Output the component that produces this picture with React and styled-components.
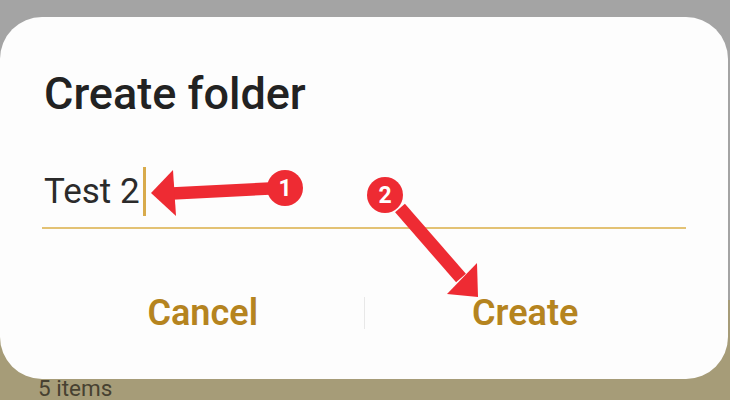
import React from 'react';
import styled, { createGlobalStyle } from 'styled-components';

const GlobalStyle = createGlobalStyle`
  html, body {
    margin: 0;
    padding: 0;
  }
  body {
    width: 730px;
    height: 400px;
    overflow: hidden;
    font-family: Roboto, "Noto Sans", sans-serif;
  }
`;

const Screen = styled.div`
  position: relative;
  width: 730px;
  height: 400px;
  display: flex;
  flex-direction: column;
  overflow: hidden;
`;

const AppBar = styled.div`
  height: 300px;
  background: #a4a4a4;
`;

const Content = styled.div`
  flex: 1;
  background: #a69c78;
  padding: 77px 0 0 38px;
`;

const ItemCount = styled.div`
  font-size: 22.5px;
  line-height: 22px;
  color: #474131;
`;

const Dialog = styled.div`
  position: absolute;
  left: 0;
  top: 17px;
  width: 728px;
  height: 362px;
  box-sizing: border-box;
  padding: 54px 42px 0 42px;
  background: #fdfdfd;
  border-radius: 42px;
  display: flex;
  flex-direction: column;
`;

const Title = styled.h2`
  margin: 0 0 0 2px;
  font-size: 45px;
  line-height: 45px;
  font-weight: 500;
  color: #222222;
`;

const Field = styled.div`
  margin-top: 51px;
  padding-bottom: 11px;
  border-bottom: 2px solid #e3c274;
  display: flex;
  align-items: center;
`;

const FieldText = styled.span`
  font-size: 35px;
  line-height: 35px;
  color: #2b2b2b;
  margin-left: 2px;
`;

const Cursor = styled.span`
  display: inline-block;
  width: 3px;
  height: 49px;
  margin-left: 3px;
  background: #d8ab4c;
`;

const Actions = styled.div`
  margin-top: 66px;
  display: flex;
  align-items: center;
`;

const ActionButton = styled.button`
  flex: 1;
  border: 0;
  background: none;
  padding: 0;
  font-family: Roboto, "Noto Sans", sans-serif;
  font-size: 36px;
  line-height: 36px;
  font-weight: 600;
  color: #b5841f;
`;

const Divider = styled.span`
  width: 1px;
  height: 32px;
  background: #e8e8e8;
`;

const Annotations = styled.svg`
  position: absolute;
  left: 0;
  top: 0;
  pointer-events: none;
`;

const RED = '#ee2b33';

const Marker = ({ cx, cy, label }) => (
  <g>
    <circle cx={cx} cy={cy} r="18" fill={RED} />
    <text
      x={cx}
      y={cy + 8}
      textAnchor="middle"
      fontFamily="Roboto, sans-serif"
      fontWeight="700"
      fontSize="23"
      fill="#ffffff"
    >
      {label}
    </text>
  </g>
);

export default function App() {
  return (
    <Screen>
      <GlobalStyle />
      <AppBar />
      <Content>
        <ItemCount>5 items</ItemCount>
      </Content>

      <Dialog>
        <Title>Create folder</Title>
        <Field>
          <FieldText>Test 2</FieldText>
          <Cursor />
        </Field>
        <Actions>
          <ActionButton>Cancel</ActionButton>
          <Divider />
          <ActionButton>Create</ActionButton>
        </Actions>
      </Dialog>

      <Annotations width="730" height="400" viewBox="0 0 730 400">
        <line x1="172" y1="193.5" x2="270" y2="188.5" stroke={RED} strokeWidth="12.5" />
        <polygon points="151,193 173,170 176,216" fill={RED} />
        <Marker cx={285} cy={188} label="1" />

        <line x1="400" y1="208" x2="461" y2="278" stroke={RED} strokeWidth="13" />
        <polygon points="447,294 477,263 478,297" fill={RED} />
        <Marker cx={385} cy={195} label="2" />
      </Annotations>
    </Screen>
  );
}
